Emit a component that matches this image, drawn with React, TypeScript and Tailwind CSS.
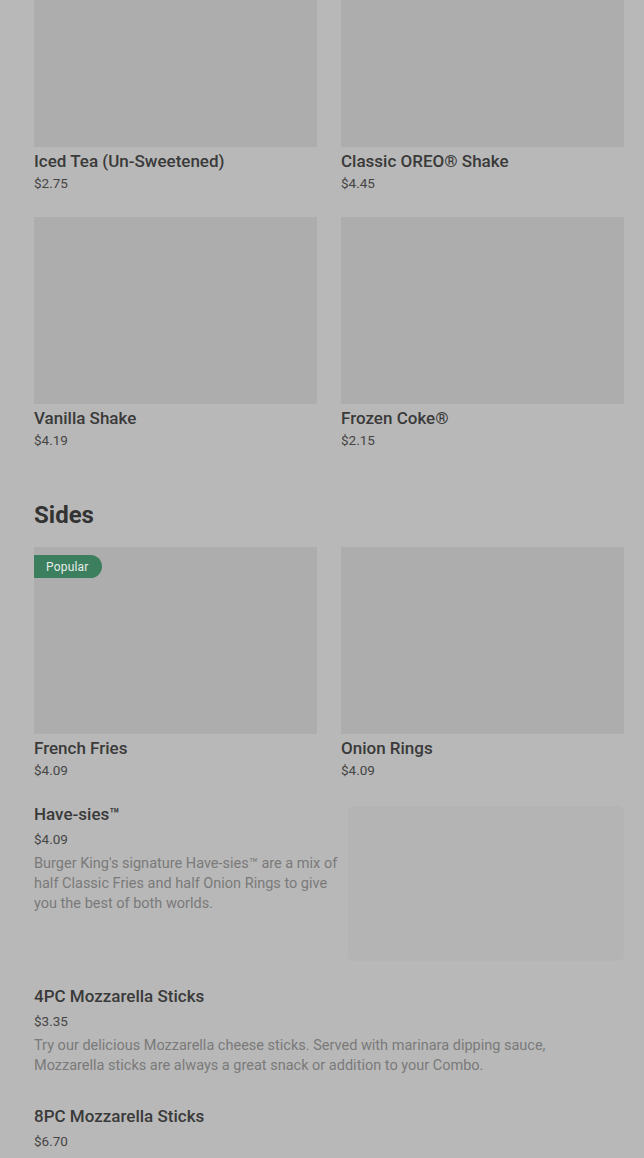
type Item = {
  name: string;
  price: string;
  popular?: boolean;
};

const drinks: Item[] = [
  { name: "Iced Tea (Un-Sweetened)", price: "$2.75" },
  { name: "Classic OREO® Shake", price: "$4.45" },
  { name: "Vanilla Shake", price: "$4.19" },
  { name: "Frozen Coke®", price: "$2.15" },
];

const sides: Item[] = [
  { name: "French Fries", price: "$4.09", popular: true },
  { name: "Onion Rings", price: "$4.09" },
];

function GridCard({ item }: { item: Item }) {
  return (
    <div className="flex flex-col">
      <div className="relative h-[187px] bg-[#adadad]">
        {item.popular && (
          <span className="absolute left-0 top-[8px] flex h-[23px] items-center rounded-r-full bg-[#3b7f5e] pl-[12px] pr-[13px] text-[12px] tracking-[0.2px] text-[#e6ece8]">
            Popular
          </span>
        )}
      </div>
      <p className="mt-[4px] text-[17px] leading-[20px] font-medium text-[#3a3a3a]">{item.name}</p>
      <p className="mt-[2px] text-[13.5px] leading-[20px] text-[#454545]">{item.price}</p>
    </div>
  );
}

function ListRow({
  name,
  price,
  description,
  withImage,
  className,
}: {
  name: string;
  price: string;
  description: string;
  withImage?: boolean;
  className?: string;
}) {
  return (
    <div className={`flex gap-[10px] ${className ?? ""}`}>
      <div className="flex flex-1 flex-col">
        <p className="text-[17px] leading-[20px] font-medium text-[#3a3a3a]">{name}</p>
        <p className="mt-[5px] text-[13.5px] leading-[20px] text-[#454545]">{price}</p>
        <p className="mt-[5px] text-[14.5px] leading-[20px] text-[#7a7a7a]">{description}</p>
      </div>
      {withImage && <div className="mt-[2px] h-[155px] w-[276px] shrink-0 rounded-md bg-[#b4b4b4]" />}
    </div>
  );
}

export default function App() {
  return (
    <div className="h-[1158px] overflow-hidden bg-[#b8b8b8] pl-[34px] pr-[20px] font-['Roboto',sans-serif]">
      <div className="-mt-[40px] grid grid-cols-2 gap-x-[24px] gap-y-[24px]">
        {drinks.map((item) => (
          <GridCard key={item.name} item={item} />
        ))}
      </div>

      <h2 className="mt-[49px] text-[24px] leading-[32px] font-bold text-[#333333]">Sides</h2>

      <div className="mt-[16px] grid grid-cols-2 gap-x-[24px]">
        {sides.map((item) => (
          <GridCard key={item.name} item={item} />
        ))}
      </div>

      <ListRow
        className="mt-[24px]"
        name="Have-sies™"
        price="$4.09"
        description="Burger King's signature Have-sies™ are a mix of half Classic Fries and half Onion Rings to give you the best of both worlds."
        withImage
      />
      <ListRow
        className="mt-[25px] pr-[60px]"
        name="4PC Mozzarella Sticks"
        price="$3.35"
        description="Try our delicious Mozzarella cheese sticks. Served with marinara dipping sauce, Mozzarella sticks are always a great snack or addition to your Combo."
      />
      <ListRow
        className="mt-[30px] pr-[60px]"
        name="8PC Mozzarella Sticks"
        price="$6.70"
        description="Try our delicious Mozzarella cheese sticks. Served with marinara dipping sauce, Mozzarella sticks are always a great snack or addition to your Combo."
      />
    </div>
  );
}
